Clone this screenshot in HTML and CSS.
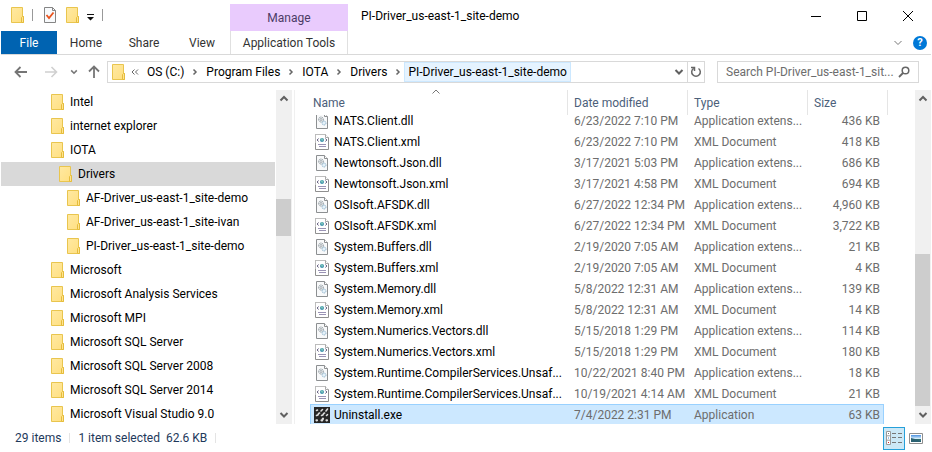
FILE: index.html
```html
<!DOCTYPE html>
<html lang="en">
<head>
<meta charset="utf-8">
<title>PI-Driver_us-east-1_site-demo</title>
<link rel="stylesheet" href="styles.css">
</head>
<body>
<svg class="sprite" aria-hidden="true">
  <defs>
    <linearGradient id="gold" x1="0" y1="0" x2="1" y2="1">
      <stop offset="0" stop-color="#ffe9a2"/><stop offset="1" stop-color="#ffdf80"/>
    </linearGradient>
    <linearGradient id="sky" x1="0" y1="0" x2="0" y2="1">
      <stop offset="0" stop-color="#4a90e0"/><stop offset=".5" stop-color="#d4ecfa"/><stop offset=".6" stop-color="#2f6b64"/><stop offset="1" stop-color="#3f86a8"/>
    </linearGradient>
  </defs>
  <symbol id="folder" viewBox="0 0 13 16">
    <path d="M.5.500h11v9h1v6H.5z" fill="url(#gold)" stroke="#e9c54e"/>
    <path d="M10.500 15.500v-5l1-1h1v6z" fill="#ffe48f" stroke="#e5bc3c"/>
  </symbol>
  <symbol id="dll" viewBox="0 0 16 16">
    <path d="M2.500.500h8l3 3v12h-11z" fill="#f8f9fa" stroke="#8c8f91"/>
    <path d="M10.500.500v3h3" fill="#fff" stroke="#8c8f91"/>
    <circle cx="7" cy="6.500" r="2.500" fill="#e6eaec" stroke="#929ba1" stroke-dasharray="1.200 .6"/>
    <circle cx="7" cy="6.500" r="1" fill="#fff" stroke="#929ba1" stroke-width=".8"/>
    <circle cx="10" cy="10" r="2" fill="#d7eaf6" stroke="#94b5ca" stroke-dasharray="1.200 .6"/>
    <circle cx="10" cy="10" r=".7" fill="#fff"/>
  </symbol>
  <symbol id="xml" viewBox="0 0 16 16">
    <path d="M1.500.500h10l3 3v12h-13z" fill="#fff" stroke="#8f8f8f"/>
    <path d="M1.500 9V.5h10l3 3" fill="none" stroke="#bdbdbd"/>
    <path d="M11.500.500v3h3" fill="#fff" stroke="#a9a9a9"/>
    <circle cx="8" cy="6" r="2" fill="#3f93ad"/><path d="M7 5l1-1 1 2-1 1z" fill="#8fd3ba"/>
    <path d="M4.500 4.500L3.200 6l1.300 1.500M11.500 4.500L12.800 6l-1.300 1.500" fill="none" stroke="#5b5578"/>
    <path d="M4 10.500h8M5 12.500h7" stroke="#9a93b5"/>
  </symbol>
  <symbol id="exe" viewBox="0 0 16 16">
    <path d="M0 0h16v16H0z" fill="#262626"/>
    <g stroke="#dcdcdc" stroke-width="1.600" stroke-linecap="round">
      <path d="M2.500 3.500l1-.5M7 4l1.500-1.500M12 4l1.500-2"/>
      <path d="M2.500 8.500l1.300-.5 1-1.700.8-.3M7.500 8.500l1.300-.5 1-1.700.8-.3M12.500 8.500l1-.8"/>
      <path d="M2.500 13.300h.5M7.500 13.300h.5l1-1.600M12.500 13.300h.5" stroke-width="2.200"/>
    </g>
  </symbol>
  <symbol id="chev-down" viewBox="0 0 10 10"><path d="M1.500 3L5 6.500 8.500 3" fill="none" stroke="currentColor" stroke-width="var(--w,2)"/></symbol>
  <symbol id="chev-up" viewBox="0 0 10 10"><path d="M1.500 6.500L5 3l3.500 3.500" fill="none" stroke="currentColor" stroke-width="var(--w,2)"/></symbol>
  <symbol id="chev-right" viewBox="0 0 6 8"><path d="M1.500 1.500L4 4 1.500 6.500" fill="none" stroke="currentColor" stroke-width="1.500"/></symbol>
</svg>

<div class="window">
  <header class="titlebar">
    <div class="quick">
      <svg class="folder"><use href="#folder"/></svg>
      <i class="bar"></i>
      <button class="plain props" aria-label="Properties"><svg width="12" height="16" viewBox="0 0 12 16"><path d="M.5.500h8l3 3v12H.5z" fill="#f8fafc" stroke="#858585"/><path d="M8.500.500v3h3" fill="none" stroke="#858585"/><path d="M2.500 8l2.500 3L9.500 5.500" fill="none" stroke="#e9531d" stroke-width="1.800"/></svg></button>
      <button class="plain newf" aria-label="New folder"><svg class="folder"><use href="#folder"/></svg></button>
      <button class="plain custom" aria-label="Customize"><svg width="7" height="7" viewBox="0 0 7 7"><path d="M0 0h7v1H0zM0 3h7L3.500 6.500z" fill="#111"/></svg></button>
      <i class="bar"></i>
    </div>
    <div class="manage">Manage</div>
    <h1>PI-Driver_us-east-1_site-demo</h1>
    <div class="controls">
      <button class="plain" aria-label="Minimize"><svg width="10" height="10"><path d="M0 5.500h10" stroke="#000"/></svg></button>
      <button class="plain" aria-label="Maximize"><svg width="10" height="10"><path d="M.5.500h9v9h-9z" fill="none" stroke="#000"/></svg></button>
      <button class="plain" aria-label="Close"><svg width="10" height="10"><path d="M0 0l10 10M10 0L0 10" stroke="#000"/></svg></button>
    </div>
  </header>

  <nav class="ribbon">
    <button class="file">File</button>
    <button>Home</button>
    <button>Share</button>
    <button>View</button>
    <button class="tools">Application Tools</button>
    <div class="help">
      <button class="plain" aria-label="Expand ribbon"><svg class="chev thin"><use href="#chev-down"/></svg></button>
      <button class="plain q" aria-label="Help">?</button>
    </div>
  </nav>

  <div class="address">
    <button class="plain nav-b" aria-label="Back"><svg width="14" height="12" viewBox="0 0 14 12"><path d="M13 6H2M6.500 1L1.500 6l5 5" fill="none" stroke="#757575" stroke-width="1.800"/></svg></button>
    <button class="plain nav-f" aria-label="Forward"><svg width="14" height="12" viewBox="0 0 14 12"><path d="M1 6h11M7.500 1l5 5-5 5" fill="none" stroke="#d0d0d0" stroke-width="1.600"/></svg></button>
    <button class="plain nav-r" aria-label="Recent locations"><svg class="chev small"><use href="#chev-down"/></svg></button>
    <button class="plain nav-u" aria-label="Up"><svg width="12" height="14" viewBox="0 0 12 14"><path d="M6 13V2M1 6.500l5-5 5 5" fill="none" stroke="#757575" stroke-width="1.800"/></svg></button>
    <div class="path">
      <svg class="folder"><use href="#folder"/></svg>
      <svg class="dbl" viewBox="0 0 8 8"><path d="M3.500 1.500L1 4l2.500 2.500M7 1.500L4.500 4 7 6.500" fill="none" stroke="#666"/></svg>
      <a href="#c">OS (C:)</a><svg class="sep"><use href="#chev-right"/></svg>
      <a href="#pf">Program Files</a><svg class="sep"><use href="#chev-right"/></svg>
      <a href="#iota">IOTA</a><svg class="sep"><use href="#chev-right"/></svg>
      <a href="#drivers">Drivers</a><svg class="sep"><use href="#chev-right"/></svg>
      <a href="#demo" class="current">PI-Driver_us-east-1_site-demo</a>
      <button class="plain drop" aria-label="Previous locations"><svg class="chev"><use href="#chev-down"/></svg></button>
      <button class="plain refresh" aria-label="Refresh"><svg width="12" height="12" viewBox="0 0 12 12"><path d="M8.500 2.500A4.300 4.300 0 1 1 3.500 2.500M1 1.500h3.500V5" fill="none" stroke="#666" stroke-width="1.500"/></svg></button>
    </div>
    <label class="search">
      <input type="text" placeholder="Search PI-Driver_us-east-1_sit..." aria-label="Search">
      <svg width="12" height="12" viewBox="0 0 12 12"><circle cx="7.500" cy="4.500" r="3.300" fill="none" stroke="#666" stroke-width="1.500"/><path d="M5 7L1 11" stroke="#666" stroke-width="1.800"/></svg>
    </label>
  </div>

  <main class="body">
    <ul class="tree">
      <li><svg class="folder"><use href="#folder"/></svg>Intel</li>
      <li><svg class="folder"><use href="#folder"/></svg>internet explorer</li>
      <li><svg class="folder"><use href="#folder"/></svg>IOTA</li>
      <li class="l2 selected"><svg class="folder"><use href="#folder"/></svg>Drivers</li>
      <li class="l3"><svg class="folder"><use href="#folder"/></svg>AF-Driver_us-east-1_site-demo</li>
      <li class="l3"><svg class="folder"><use href="#folder"/></svg>AF-Driver_us-east-1_site-ivan</li>
      <li class="l3"><svg class="folder"><use href="#folder"/></svg>PI-Driver_us-east-1_site-demo</li>
      <li><svg class="folder"><use href="#folder"/></svg>Microsoft</li>
      <li><svg class="folder"><use href="#folder"/></svg>Microsoft Analysis Services</li>
      <li><svg class="folder"><use href="#folder"/></svg>Microsoft MPI</li>
      <li><svg class="folder"><use href="#folder"/></svg>Microsoft SQL Server</li>
      <li><svg class="folder"><use href="#folder"/></svg>Microsoft SQL Server 2008</li>
      <li><svg class="folder"><use href="#folder"/></svg>Microsoft SQL Server 2014</li>
      <li><svg class="folder"><use href="#folder"/></svg>Microsoft Visual Studio 9.0</li>
    </ul>
    <div class="scroll">
      <svg class="chev"><use href="#chev-up"/></svg>
      <div class="track tree-track"><i class="thumb"></i></div>
      <svg class="chev"><use href="#chev-down"/></svg>
    </div>
    <div class="files">
      <table>
        <colgroup><col><col class="c-date"><col class="c-type"><col class="c-size"></colgroup>
        <thead><tr><th>Name<svg class="chev thin sort"><use href="#chev-up"/></svg></th><th>Date modified</th><th>Type</th><th>Size</th></tr></thead>
        <tbody>
          <tr class="first"><td><div><svg class="ico"><use href="#dll"/></svg><span>NATS.Client.dll</span></div></td><td>6/23/2022 7:10 PM</td><td>Application extens...</td><td>436 KB</td></tr>
          <tr><td><div><svg class="ico"><use href="#xml"/></svg><span>NATS.Client.xml</span></div></td><td>6/23/2022 7:10 PM</td><td>XML Document</td><td>418 KB</td></tr>
          <tr><td><div><svg class="ico"><use href="#dll"/></svg><span>Newtonsoft.Json.dll</span></div></td><td>3/17/2021 5:03 PM</td><td>Application extens...</td><td>686 KB</td></tr>
          <tr><td><div><svg class="ico"><use href="#xml"/></svg><span>Newtonsoft.Json.xml</span></div></td><td>3/17/2021 4:58 PM</td><td>XML Document</td><td>694 KB</td></tr>
          <tr><td><div><svg class="ico"><use href="#dll"/></svg><span>OSIsoft.AFSDK.dll</span></div></td><td>6/27/2022 12:34 PM</td><td>Application extens...</td><td>4,960 KB</td></tr>
          <tr><td><div><svg class="ico"><use href="#xml"/></svg><span>OSIsoft.AFSDK.xml</span></div></td><td>6/27/2022 12:34 PM</td><td>XML Document</td><td>3,722 KB</td></tr>
          <tr><td><div><svg class="ico"><use href="#dll"/></svg><span>System.Buffers.dll</span></div></td><td>2/19/2020 7:05 AM</td><td>Application extens...</td><td>21 KB</td></tr>
          <tr><td><div><svg class="ico"><use href="#xml"/></svg><span>System.Buffers.xml</span></div></td><td>2/19/2020 7:05 AM</td><td>XML Document</td><td>4 KB</td></tr>
          <tr><td><div><svg class="ico"><use href="#dll"/></svg><span>System.Memory.dll</span></div></td><td>5/8/2022 12:31 AM</td><td>Application extens...</td><td>139 KB</td></tr>
          <tr><td><div><svg class="ico"><use href="#xml"/></svg><span>System.Memory.xml</span></div></td><td>5/8/2022 12:31 AM</td><td>XML Document</td><td>14 KB</td></tr>
          <tr><td><div><svg class="ico"><use href="#dll"/></svg><span>System.Numerics.Vectors.dll</span></div></td><td>5/15/2018 1:29 PM</td><td>Application extens...</td><td>114 KB</td></tr>
          <tr><td><div><svg class="ico"><use href="#xml"/></svg><span>System.Numerics.Vectors.xml</span></div></td><td>5/15/2018 1:29 PM</td><td>XML Document</td><td>180 KB</td></tr>
          <tr><td><div><svg class="ico"><use href="#dll"/></svg><span>System.Runtime.CompilerServices.Unsaf...</span></div></td><td>10/22/2021 8:40 PM</td><td>Application extens...</td><td>18 KB</td></tr>
          <tr><td><div><svg class="ico"><use href="#xml"/></svg><span>System.Runtime.CompilerServices.Unsaf...</span></div></td><td>10/19/2021 4:14 AM</td><td>XML Document</td><td>21 KB</td></tr>
          <tr class="selected"><td><div><svg class="ico"><use href="#exe"/></svg><span>Uninstall.exe</span></div></td><td>7/4/2022 2:31 PM</td><td>Application</td><td>63 KB</td></tr>
        </tbody>
      </table>
    </div>
    <div class="scroll">
      <svg class="chev"><use href="#chev-up"/></svg>
      <div class="track file-track"><i class="thumb"></i></div>
      <svg class="chev"><use href="#chev-down"/></svg>
    </div>
  </main>

  <footer class="status">
    <span>29 items</span><i></i><span>1 item selected&nbsp; 62.6 KB</span><i></i>
    <div class="views">
      <button class="plain on" aria-label="Details view"><svg width="17" height="14" viewBox="0 0 17 14"><path d="M.5.500h4v13h-4zM.5 4.800h4M.5 9.200h4" fill="#fff" stroke="#9a9a9a"/><path d="M6 2.500h4M12 2.500h4M6 6.500h4M12 6.500h4M6 11.500h4M12 11.500h4" stroke="#777"/><path d="M2 2h1v1H2z" fill="#777"/><path d="M2 6.500h1v1H2z" fill="#3b7fd0"/><path d="M2 11h1v1H2z" fill="#d22"/></svg></button>
      <button class="plain" aria-label="Large icons view"><svg width="14" height="11" viewBox="0 0 14 11"><path d="M.5.500h13v10H.5z" fill="#fff" stroke="#8e8e8e"/><path d="M2 2h10v7H2z" fill="url(#sky)"/><path d="M2 5l4 1 6 2v1H2z" fill="#2a6171"/></svg></button>
    </div>
  </footer>
</div>
</body>
</html>
```

FILE: styles.css
```css
* { box-sizing: border-box; }
body {
  margin: 0;
  background: #fff;
  color: #000;
  font: 12px/16px Roboto, "Open Sans", sans-serif;
}
button, input { font: inherit; color: inherit; }
svg { display: block; flex: none; }
.sprite { position: absolute; width: 0; height: 0; }
.plain { border: 0; padding: 0; background: none; display: flex; align-items: center; justify-content: center; }
.folder { width: 13px; height: 16px; }
.ico { width: 16px; height: 16px; }
.chev { width: 10px; height: 10px; color: #606060; }
.thin { --w: 1; color: #777; }
.small { width: 8px; height: 8px; color: #777; }

.window { display: flex; flex-direction: column; min-height: 100vh; padding: 0 1px; }

.titlebar { display: flex; height: 31px; }
.quick { display: flex; width: 229px; padding: 7px 0 0 10px; align-items: flex-start; }
.quick .bar { width: 1px; height: 12px; margin: 2px 0 0 8px; background: #999; }
.props { margin-left: 11px; }
.newf { margin-left: 10px; }
.custom { margin: 7px 0 0 8px; }
.manage { width: 118px; margin-top: 4px; padding-top: 6px; background: #e9cbfd; color: #4c3b66; text-align: center; }
h1 { margin: 0 0 0 13px; padding-top: 8px; font: inherit; flex: 1; }
.controls { display: flex; }
.controls button { width: 46px; }

.ribbon { display: flex; height: 24px; border-bottom: 1px solid #d9d9d9; }
.ribbon > button { width: 58px; border: 0; padding: 0; background: none; color: #333; }
.ribbon > .file { width: 56px; background: #0063b1; color: #fff; }
.ribbon > .tools { width: 118px; margin-left: -1px; border: solid #e0e0e0; border-width: 0 1px; }
.help { display: flex; margin-left: auto; padding-right: 4px; gap: 10px; align-items: center; }
.q { width: 14px; height: 14px; border-radius: 50%; background: #0078d7; color: #fff; font-size: 11px; font-weight: 700; }

.address { display: flex; height: 35px; padding: 6px 12px 7px 13px; }
.nav-f { margin-left: 16px; }
.nav-r { margin-left: 12px; }
.nav-u { margin-left: 10px; }
.path { display: flex; flex: 1; align-items: center; margin-left: 7px; padding-left: 4px; border: 1px solid #d9d9d9; }
.path a { padding: 0 4px; line-height: 20px; color: #000; text-decoration: none; white-space: nowrap; }
.path .current { margin-left: -1px; background: #e5f3ff; box-shadow: 0 0 0 1px #cce8ff inset; }
.dbl { width: 8px; height: 8px; margin: 0 4px 0 6px; }
.sep { width: 6px; height: 8px; margin: 0 4px; color: #666; }
.drop { margin-left: auto; width: 16px; align-self: stretch; }
.refresh { width: 17px; border-left: 1px solid #d9d9d9; align-self: stretch; }
.search { display: flex; width: 202px; margin-left: 12px; padding: 0 8px; align-items: center; border: 1px solid #d9d9d9; }
.search input { flex: 1; min-width: 0; padding: 0; border: 0; outline: 0; background: none; }
.search input::placeholder { color: #6d6d6d; opacity: 1; }

.body { display: flex; }
.tree { flex: 0 0 275px; margin: 0; padding: 0; list-style: none; }
.tree li { display: flex; align-items: center; gap: 6px; height: 24px; padding-left: 50px; white-space: nowrap; }
.tree .l2 { padding-left: 58px; }
.tree .l3 { padding-left: 66px; }
.tree .selected { background: #d9d9d9; margin-right: 1px; }
.scroll { display: flex; flex-direction: column; align-items: center; width: 16px; height: 334px; padding: 4px 0; background: #f0f0f0; }
.track { flex: 1; width: 100%; display: flex; flex-direction: column; }
.thumb { background: #cdcdcd; margin-right: 1px; }
.tree-track .thumb { margin-top: 95px; height: 37px; }
.file-track .thumb { margin-top: 150px; height: 152px; }

.files { flex: 1; margin-left: 2px; padding: 0 31px 0 15px; border-left: 1px solid #f0f0f0; height: 334px; overflow: hidden; }
table { width: 100%; border-collapse: separate; border-spacing: 0; table-layout: fixed; }
.c-date { width: 120px; }
.c-type { width: 120px; }
.c-size { width: 76px; }
th { position: relative; z-index: 1; height: 25px; padding: 1px 6px 0; background: #fff; border-right: 1px solid #e5e5e5; color: #4c607a; font-weight: 400; text-align: left; }
th:first-child { padding-left: 3px; }
th:last-child { border-right: 0; }
th:last-child::after { content: ""; position: absolute; top: 0; bottom: 0; right: -4px; width: 1px; background: #e5e5e5; }
.sort { position: absolute; top: -3px; left: 47%; }
td { height: 21px; padding: 0 6px; color: #6d6d6d; white-space: nowrap; }
td:first-child { padding: 0 0 0 4px; color: #000; }
td:last-child { text-align: right; padding-right: 4px; }
td div { display: flex; align-items: center; gap: 4px; }
.first td, .first td:first-child, .first td:last-child { height: 16px; padding-top: 0; padding-bottom: 4px; line-height: 12px; }
.first div { height: 12px; }
tr.selected { background: #cce8ff; box-shadow: 0 0 0 1px #99d1ff inset; }

.status { display: flex; align-items: center; height: 24px; padding: 0 4px 0 14px; color: #1e395b; }
.status > i { width: 1px; height: 10px; margin: 0 8px; background: #e4e4e4; }
.views { display: flex; margin-left: auto; }
.views button { width: 22px; height: 23px; }
.views .on { background: #cce8f6; border: 1px solid #26a0da; }
```
